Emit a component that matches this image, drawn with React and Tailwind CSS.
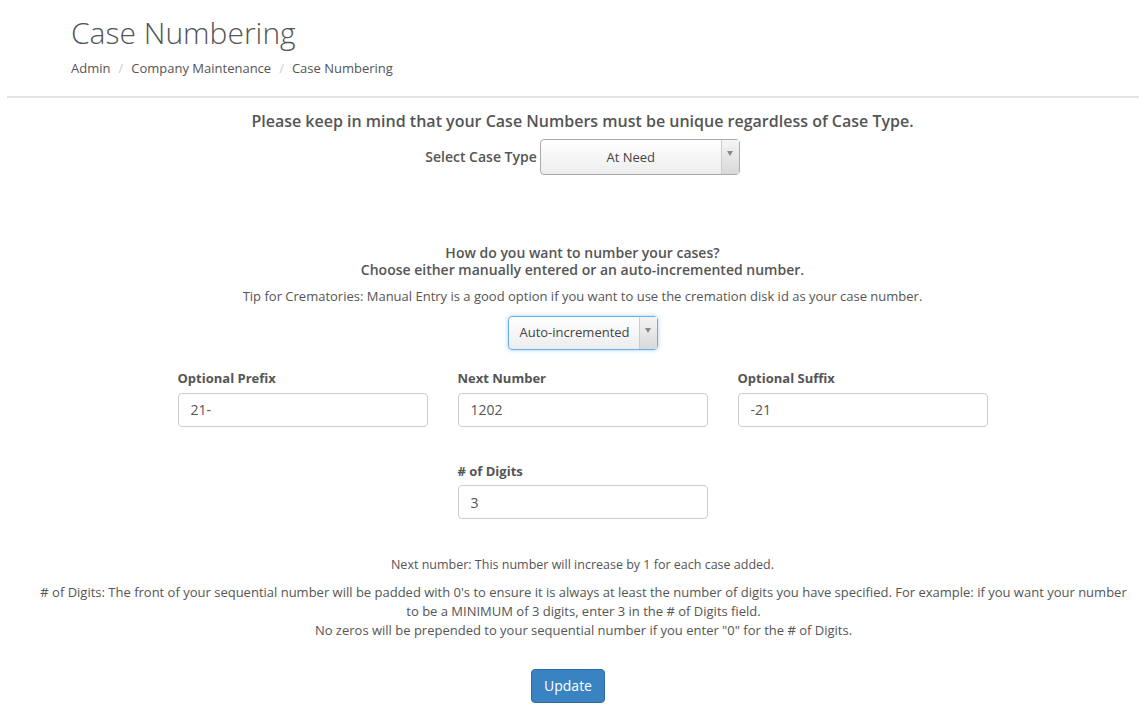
import { useState } from 'react'

function FakeSelect({ value, width, focused, textClass }) {
  return (
    <div
      className={
        'flex rounded-[4px] border bg-gradient-to-b from-white to-[#ededed] text-[13px] text-[#444] ' +
        width +
        (focused
          ? ' h-[34px] border-[#66afe9] shadow-[0_0_4px_rgba(102,175,233,0.6)]'
          : ' h-[36px] border-[#aaa]')
      }
    >
      <div className={'flex flex-1 items-center justify-center ' + textClass}>{value}</div>
      <div className="flex w-[18px] justify-center border-l border-[#ccc] bg-gradient-to-b from-[#f5f5f5] to-[#d8d8d8] pt-[11px]">
        <div className="h-0 w-0 border-x-[3px] border-t-[5px] border-x-transparent border-t-[#888]" />
      </div>
    </div>
  )
}

function Field({ label, value }) {
  return (
    <div className="w-[250px]">
      <label className="block text-[13px] font-bold text-[#555]">{label}</label>
      <input
        defaultValue={value}
        className="mt-[4px] h-[34px] w-full rounded-[4px] border border-[#ccc] px-[12px] text-[14px] text-[#555] outline-none"
      />
    </div>
  )
}

function App() {
  const [caseType] = useState('At Need')

  return (
    <div className="min-h-screen bg-white font-['Open_Sans',sans-serif] text-[#555]">
      {/* HEADER */}
      <header className="px-[71px] pt-[14px]">
        <h1 className="text-[30px] font-light leading-[38px] text-[#555]">Case Numbering</h1>
        <nav className="mt-[7px] flex items-center text-[13px] text-[#555]">
          <span>Admin</span>
          <span className="px-[8px] text-[#ccc]">/</span>
          <span>Company Maintenance</span>
          <span className="px-[8px] text-[#ccc]">/</span>
          <span>Case Numbering</span>
        </nav>
      </header>

      <hr className="ml-[7px] mt-[17px] border-t-2 border-[#e3e3e3]" />

      {/* MAIN */}
      <main className="flex flex-col items-center">
        <div className="flex flex-col items-center pl-[26px]">
          <h2 className="mt-[12px] text-[16px] font-semibold leading-[22px]">
            Please keep in mind that your Case Numbers must be unique regardless of Case Type.
          </h2>

          <div className="mt-[7px] flex items-center gap-[3px]">
            <span className="text-[14px] font-semibold">Select Case Type</span>
            <FakeSelect value={caseType} width="w-[200px]" textClass="pt-[2px]" />
          </div>

          <div className="mt-[69px] text-center text-[14px] font-semibold leading-[17px]">
            <p>How do you want to number your cases?</p>
            <p>Choose either manually entered or an auto-incremented number.</p>
          </div>

          <p className="mt-[9px] text-[13px]">
            Tip for Crematories: Manual Entry is a good option if you want to use the cremation disk id as your case number.
          </p>

          <div className="mt-[10px]">
            <FakeSelect value="Auto-incremented" width="w-[150px]" focused textClass="pl-[2px]" />
          </div>

          <div className="mt-[19px] grid grid-cols-3 gap-x-[30px] gap-y-[35px]">
            <Field label="Optional Prefix" value="21-" />
            <Field label="Next Number" value="1202" />
            <Field label="Optional Suffix" value="-21" />
            <div />
            <Field label="# of Digits" value="3" />
          </div>

          <p className="mt-[37px] text-[12.5px]">Next number: This number will increase by 1 for each case added.</p>
        </div>

        <div className="mt-[8px] w-full pl-[36px] pr-[8px] text-center text-[13px] leading-[19px]">
          <p>
            # of Digits: The front of your sequential number will be padded with 0's to ensure it is always at least the number of digits you have specified. For example: if you want your number to be a MINIMUM of 3 digits, enter 3 in the # of Digits field.
          </p>
          <p>No zeros will be prepended to your sequential number if you enter "0" for the # of Digits.</p>
        </div>

        <button className="mr-[3px] mt-[29px] h-[34px] rounded-[4px] border border-[#2e6da4] bg-[#3a83c2] px-[12px] text-[14px] text-white">
          Update
        </button>
      </main>
    </div>
  )
}

export default App
